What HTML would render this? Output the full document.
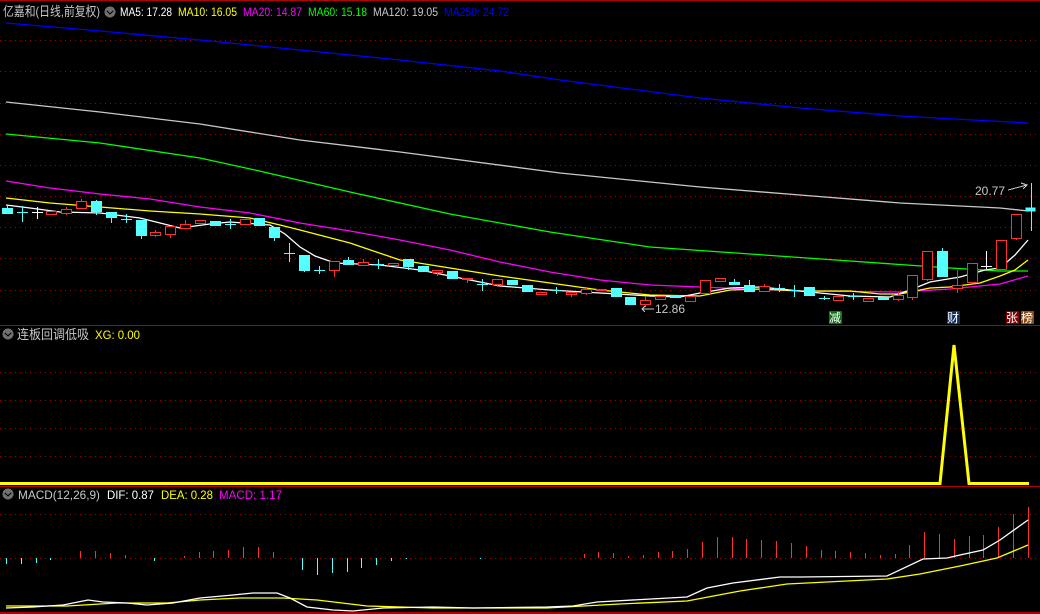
<!DOCTYPE html>
<html><head><meta charset="utf-8"><style>
html,body{margin:0;padding:0;background:#000;width:1040px;height:614px;overflow:hidden}
svg{display:block}
text{font-family:"Liberation Sans","Noto Sans CJK SC",sans-serif;font-size:12px}
</style></head><body>
<svg width="1040" height="614" viewBox="0 0 1040 614" xmlns="http://www.w3.org/2000/svg" shape-rendering="crispEdges">
<rect width="1040" height="614" fill="#000"/>
<g fill="#b00000">
<rect x="0" y="0" width="1040" height="1"/>
<rect x="0" y="325" width="1040" height="1"/>
<rect x="0" y="486" width="1040" height="1"/>
<rect x="0" y="612" width="1040" height="2"/>
</g>
<g stroke="#a00000" stroke-width="1" stroke-dasharray="1,4">
<line x1="0" y1="40.5" x2="1040" y2="40.5"/><line x1="0" y1="71.5" x2="1040" y2="71.5"/>
<line x1="0" y1="103.5" x2="1040" y2="103.5"/><line x1="0" y1="134.5" x2="1040" y2="134.5"/>
<line x1="0" y1="165.5" x2="1040" y2="165.5"/><line x1="0" y1="196.5" x2="1040" y2="196.5"/>
<line x1="0" y1="227.5" x2="1040" y2="227.5"/><line x1="0" y1="258.5" x2="1040" y2="258.5"/>
<line x1="0" y1="290.5" x2="1040" y2="290.5"/>
<line x1="0" y1="372.5" x2="1040" y2="372.5"/><line x1="0" y1="400.5" x2="1040" y2="400.5"/>
<line x1="0" y1="428.5" x2="1040" y2="428.5"/><line x1="0" y1="456.5" x2="1040" y2="456.5"/>
<line x1="0" y1="514.5" x2="1040" y2="514.5"/><line x1="0" y1="558.5" x2="1040" y2="558.5"/>
</g>
<g fill="none" stroke-width="1.3" shape-rendering="auto">
<polyline stroke="#0000ff" points="6,23 100,31 200,40 300,50 400,60 500,71 560,80 700,98 800,108 900,116 1028,123"/>
<polyline stroke="#c8c8c8" points="6,102 100,112 200,124 300,140 400,152 560,173 700,187 800,195 900,203 1000,208 1028,211"/>
<polyline stroke="#00ff00" points="6,134 100,143 200,158 255,170 350,192 450,214 550,232 650,247 750,254 850,261 950,268 1000,271 1028,271"/>
<polyline stroke="#ff00ff" points="6,181 50,188 100,194 150,199 200,207 250,213 300,223 350,231 400,240 450,250 500,262 550,272 600,280 650,285 700,287 800,291 900,292 950,289 1000,284 1028,276"/>
<polyline stroke="#ffff00" points="6,198 50,203 100,207 150,211 200,214 250,218 280,225 300,230 350,243 400,260 450,268 500,276 550,283 600,290 650,295 700,296 730,290 760,289 800,291 850,291 880,294 900,294 930,288 950,287 980,283 1000,276 1015,270 1028,260"/>
<polyline stroke="#ffffff" points="6,205 30,208 60,212 100,213 140,218 180,228 210,224 230,222 270,225 285,234 300,247 315,256 335,263 380,265 420,270 460,278 500,286 550,290 600,293 650,296 680,297 700,293 730,288 760,287 800,291 850,296 890,297 910,290 930,282 960,277 985,270 1000,268 1015,255 1028,240"/>
</g>
<g stroke-width="1">
<g stroke="#ff3030" fill="#000">
<line x1="51.5" y1="211" x2="51.5" y2="214"/><rect x="46.5" y="211.5" width="10" height="3"/>
<line x1="66.5" y1="207" x2="66.5" y2="215"/><rect x="61.5" y="209.5" width="10" height="4"/>
<line x1="81.5" y1="199" x2="81.5" y2="208"/><rect x="76.5" y="201.5" width="10" height="7"/>
<line x1="155.5" y1="230" x2="155.5" y2="237"/><rect x="150.5" y="232.5" width="10" height="3"/>
<line x1="170.5" y1="226" x2="170.5" y2="238"/><rect x="165.5" y="226.5" width="10" height="8"/>
<line x1="185.5" y1="220" x2="185.5" y2="228"/><rect x="180.5" y="224.5" width="10" height="4"/>
<rect x="195.5" y="220.5" width="10" height="3"/>
<rect x="240.5" y="219.5" width="10" height="5"/>
<line x1="334.5" y1="261" x2="334.5" y2="277"/><rect x="329.5" y="261.5" width="10" height="9"/>
<line x1="363.5" y1="259" x2="363.5" y2="265"/><rect x="358.5" y="262.5" width="10" height="3"/>
<rect x="388.5" y="263.5" width="10" height="2"/>
<line x1="437.5" y1="270" x2="437.5" y2="276"/><rect x="432.5" y="270.5" width="10" height="2"/>
<line x1="467.5" y1="278" x2="467.5" y2="283"/><rect x="462.5" y="278.5" width="10" height="1"/>
<line x1="497.5" y1="279" x2="497.5" y2="287"/><rect x="492.5" y="279.5" width="10" height="5"/>
<rect x="536.5" y="292.5" width="10" height="2"/>
<line x1="571.5" y1="292" x2="571.5" y2="297"/><rect x="566.5" y="292.5" width="10" height="2"/>
<line x1="586.5" y1="287" x2="586.5" y2="295"/><rect x="581.5" y="289.5" width="10" height="4"/>
<rect x="596.5" y="289.5" width="10" height="1"/>
<line x1="645.5" y1="296" x2="645.5" y2="307"/><rect x="640.5" y="300.5" width="10" height="4"/>
<rect x="655.5" y="296.5" width="10" height="3"/>
<rect x="685.5" y="296.5" width="10" height="5"/>
<rect x="700.5" y="280.5" width="10" height="13"/>
<rect x="715.5" y="278.5" width="10" height="3"/>
<line x1="764.5" y1="284" x2="764.5" y2="291"/><rect x="759.5" y="286.5" width="10" height="5"/>
<rect x="833.5" y="296.5" width="10" height="4"/>
<rect x="863.5" y="298.5" width="10" height="3"/>
<line x1="898.5" y1="292" x2="898.5" y2="301"/><rect x="893.5" y="295.5" width="10" height="4"/>
<line x1="912.5" y1="275" x2="912.5" y2="300"/><rect x="907.5" y="275.5" width="10" height="22"/>
<line x1="927.5" y1="251" x2="927.5" y2="281"/><rect x="922.5" y="251.5" width="10" height="28"/>
<line x1="957.5" y1="270" x2="957.5" y2="293"/><rect x="952.5" y="285.5" width="10" height="3"/>
<rect x="967.5" y="263.5" width="10" height="19"/>
<rect x="996.5" y="240.5" width="10" height="29"/>
<line x1="1016.5" y1="238" x2="1016.5" y2="240"/><rect x="1011.5" y="214.5" width="10" height="24"/>
</g>
<g fill="#54ffff" stroke="#54ffff">
<line x1="7.5" y1="205" x2="7.5" y2="214"/><rect x="2.5" y="208.5" width="10" height="5"/>
<line x1="22.5" y1="206" x2="22.5" y2="222"/><line x1="17" y1="212.5" x2="28" y2="212.5"/>
<line x1="96.5" y1="200" x2="96.5" y2="215"/><rect x="91.5" y="201.5" width="10" height="10"/>
<line x1="111.5" y1="212" x2="111.5" y2="223"/><rect x="106.5" y="212.5" width="10" height="5"/>
<line x1="126.5" y1="214" x2="126.5" y2="223"/><line x1="121" y1="219.5" x2="132" y2="219.5"/>
<line x1="141.5" y1="220" x2="141.5" y2="239"/><rect x="136.5" y="220.5" width="10" height="15"/>
<rect x="210.5" y="221.5" width="10" height="4"/>
<line x1="230.5" y1="219" x2="230.5" y2="229"/><line x1="225" y1="224.5" x2="236" y2="224.5"/>
<rect x="254.5" y="218.5" width="10" height="7"/>
<line x1="274.5" y1="227" x2="274.5" y2="241"/><rect x="269.5" y="227.5" width="10" height="10"/>
<line x1="289.5" y1="243" x2="289.5" y2="262"/><line x1="284" y1="253.5" x2="295" y2="253.5"/>
<line x1="304.5" y1="255" x2="304.5" y2="272"/><rect x="299.5" y="255.5" width="10" height="15"/>
<line x1="319.5" y1="266" x2="319.5" y2="274"/><line x1="314" y1="270.5" x2="325" y2="270.5"/>
<line x1="348.5" y1="257" x2="348.5" y2="265"/><rect x="343.5" y="260.5" width="10" height="4"/>
<line x1="378.5" y1="259" x2="378.5" y2="269"/><line x1="373" y1="264.5" x2="384" y2="264.5"/>
<line x1="408.5" y1="259" x2="408.5" y2="270"/><rect x="403.5" y="259.5" width="10" height="7"/>
<rect x="418.5" y="266.5" width="10" height="5"/>
<rect x="447.5" y="271.5" width="10" height="7"/>
<line x1="482.5" y1="279" x2="482.5" y2="291"/><line x1="477" y1="284.5" x2="488" y2="284.5"/>
<rect x="507.5" y="280.5" width="10" height="4"/>
<rect x="522.5" y="285.5" width="10" height="6"/>
<line x1="556.5" y1="287" x2="556.5" y2="294"/><line x1="551" y1="290.5" x2="562" y2="290.5"/>
<rect x="611.5" y="288.5" width="10" height="8"/>
<rect x="625.5" y="297.5" width="10" height="7"/>
<rect x="670.5" y="295.5" width="10" height="2"/>
<line x1="734.5" y1="279" x2="734.5" y2="285"/><rect x="729.5" y="282.5" width="10" height="2"/>
<line x1="749.5" y1="280" x2="749.5" y2="292"/><rect x="744.5" y="285.5" width="10" height="6"/>
<line x1="779.5" y1="284" x2="779.5" y2="292"/><line x1="774" y1="288.5" x2="785" y2="288.5"/>
<line x1="794.5" y1="285" x2="794.5" y2="297"/><line x1="789" y1="290.5" x2="800" y2="290.5"/>
<rect x="804.5" y="287.5" width="10" height="8"/>
<line x1="824.5" y1="296" x2="824.5" y2="300"/><line x1="819" y1="298.5" x2="830" y2="298.5"/>
<line x1="853.5" y1="293" x2="853.5" y2="300"/><line x1="848" y1="296.5" x2="859" y2="296.5"/>
<rect x="878.5" y="297.5" width="10" height="2"/>
<line x1="942.5" y1="248" x2="942.5" y2="277"/><rect x="937.5" y="251.5" width="10" height="25"/>
<line x1="1031.5" y1="183" x2="1031.5" y2="231"/><rect x="1026" y="208" width="9" height="3"/>
</g>
<g stroke="#fff"><line x1="37.5" y1="207" x2="37.5" y2="219"/><line x1="32" y1="212.5" x2="43" y2="212.5"/>
<line x1="986.5" y1="251" x2="986.5" y2="269"/><line x1="981" y1="266.5" x2="992" y2="266.5"/></g>
</g>
<text x="975" y="195" fill="#c8c8c8">20.77</text>
<path d="M1008,190 L1027,185 M1021,183 L1027,185 L1023,189" stroke="#c8c8c8" fill="none" stroke-width="1"/>
<path d="M642,309 L654,309 M645,306 L642,309 L645,312" stroke="#c8c8c8" fill="none"/>
<text x="655" y="313" fill="#c8c8c8">12.86</text>
<rect x="829" y="311" width="13" height="13" fill="#107010"/><text x="829" y="322" fill="#fff">减</text>
<rect x="947" y="311" width="13" height="13" fill="#103060"/><text x="947" y="322" fill="#fff">财</text>
<rect x="1006" y="311" width="13" height="13" fill="#800000"/><text x="1006" y="322" fill="#fff">张</text>
<rect x="1021" y="311" width="13" height="13" fill="#8a4a10"/><text x="1021" y="322" fill="#fff">榜</text>
<text x="3" y="16" fill="#c8c8c8" style="font-size:13px" textLength="97" lengthAdjust="spacingAndGlyphs">亿嘉和(日线,前复权)</text>
<circle cx="110" cy="12" r="5.5" fill="#707070"/><path d="M107,11 L110,14 L113,11" stroke="#000" fill="none" stroke-width="1.3"/>
<text x="120" y="16" fill="#fff" textLength="52" lengthAdjust="spacingAndGlyphs">MA5: 17.28</text>
<text x="178" y="16" fill="#ffff00" textLength="59" lengthAdjust="spacingAndGlyphs">MA10: 16.05</text>
<text x="243" y="16" fill="#ff00ff" textLength="59" lengthAdjust="spacingAndGlyphs">MA20: 14.87</text>
<text x="308" y="16" fill="#00ff00" textLength="59" lengthAdjust="spacingAndGlyphs">MA60: 15.18</text>
<text x="373" y="16" fill="#c8c8c8" textLength="65" lengthAdjust="spacingAndGlyphs">MA120: 19.05</text>
<text x="444" y="16" fill="#0000ff" textLength="65" lengthAdjust="spacingAndGlyphs">MA250: 24.72</text>
<circle cx="8" cy="334" r="5.5" fill="#707070"/><path d="M5,333 L8,336 L11,333" stroke="#000" fill="none" stroke-width="1.3"/>
<text x="17" y="339" fill="#c8c8c8" style="font-size:13px" textLength="72" lengthAdjust="spacingAndGlyphs">连板回调低吸</text>
<text x="95" y="339" fill="#ffff00" textLength="45" lengthAdjust="spacingAndGlyphs">XG: 0.00</text>
<polyline fill="none" stroke="#ffff00" stroke-width="3" shape-rendering="auto" points="0,483.5 940,483.5 954,345 969,483.5 1029,483.5"/>
<circle cx="8" cy="494" r="5.5" fill="#707070"/><path d="M5,493 L8,496 L11,493" stroke="#000" fill="none" stroke-width="1.3"/>
<text x="18" y="499" fill="#c8c8c8" textLength="82" lengthAdjust="spacingAndGlyphs">MACD(12,26,9)</text>
<text x="107" y="499" fill="#fff" textLength="47" lengthAdjust="spacingAndGlyphs">DIF: 0.87</text>
<text x="161" y="499" fill="#ffff00" textLength="52" lengthAdjust="spacingAndGlyphs">DEA: 0.28</text>
<text x="219" y="499" fill="#ff00ff" textLength="63" lengthAdjust="spacingAndGlyphs">MACD: 1.17</text>
<g stroke="#54ffff">
<line x1="6.5" y1="558" x2="6.5" y2="564"/><line x1="21.5" y1="558" x2="21.5" y2="564"/><line x1="36.5" y1="558" x2="36.5" y2="563"/><line x1="50.5" y1="558" x2="50.5" y2="560"/>
<line x1="154.5" y1="558" x2="154.5" y2="561"/>
<line x1="302.5" y1="558" x2="302.5" y2="570"/><line x1="317.5" y1="558" x2="317.5" y2="575"/><line x1="332.5" y1="558" x2="332.5" y2="573"/><line x1="347.5" y1="558" x2="347.5" y2="572"/><line x1="361.5" y1="558" x2="361.5" y2="568"/><line x1="376.5" y1="558" x2="376.5" y2="565"/><line x1="391.5" y1="558" x2="391.5" y2="561"/><line x1="406.5" y1="558" x2="406.5" y2="559"/><line x1="480.5" y1="558" x2="480.5" y2="559"/>
</g>
<g stroke="#ff3030">
<line x1="80.5" y1="551" x2="80.5" y2="558"/><line x1="95.5" y1="551" x2="95.5" y2="558"/><line x1="110.5" y1="553" x2="110.5" y2="558"/><line x1="125.5" y1="555" x2="125.5" y2="558"/>
<line x1="184.5" y1="556" x2="184.5" y2="558"/><line x1="199.5" y1="552" x2="199.5" y2="558"/><line x1="213.5" y1="551" x2="213.5" y2="558"/><line x1="228.5" y1="550" x2="228.5" y2="558"/><line x1="243.5" y1="547" x2="243.5" y2="558"/><line x1="258.5" y1="547" x2="258.5" y2="558"/><line x1="273.5" y1="552" x2="273.5" y2="558"/>
<line x1="584.5" y1="554" x2="584.5" y2="558"/><line x1="598.5" y1="552" x2="598.5" y2="558"/><line x1="613.5" y1="553" x2="613.5" y2="558"/><line x1="628.5" y1="556" x2="628.5" y2="558"/><line x1="643.5" y1="555" x2="643.5" y2="558"/><line x1="658.5" y1="552" x2="658.5" y2="558"/><line x1="672.5" y1="551" x2="672.5" y2="558"/><line x1="687.5" y1="549" x2="687.5" y2="558"/><line x1="702.5" y1="542" x2="702.5" y2="558"/><line x1="717.5" y1="537" x2="717.5" y2="558"/><line x1="732.5" y1="537" x2="732.5" y2="558"/><line x1="746.5" y1="539" x2="746.5" y2="558"/><line x1="761.5" y1="540" x2="761.5" y2="558"/><line x1="776.5" y1="541" x2="776.5" y2="558"/><line x1="791.5" y1="543" x2="791.5" y2="558"/><line x1="806.5" y1="546" x2="806.5" y2="558"/><line x1="821.5" y1="550" x2="821.5" y2="558"/><line x1="835.5" y1="551" x2="835.5" y2="558"/><line x1="850.5" y1="552" x2="850.5" y2="558"/><line x1="865.5" y1="553" x2="865.5" y2="558"/><line x1="880.5" y1="555" x2="880.5" y2="558"/><line x1="895.5" y1="554" x2="895.5" y2="558"/><line x1="909.5" y1="545" x2="909.5" y2="558"/><line x1="924.5" y1="532" x2="924.5" y2="558"/><line x1="939.5" y1="534" x2="939.5" y2="558"/><line x1="954.5" y1="539" x2="954.5" y2="558"/><line x1="969.5" y1="536" x2="969.5" y2="558"/><line x1="983.5" y1="535" x2="983.5" y2="558"/><line x1="998.5" y1="527" x2="998.5" y2="558"/><line x1="1013.5" y1="514" x2="1013.5" y2="558"/><line x1="1028.5" y1="507" x2="1028.5" y2="558"/>
</g>
<g fill="none" stroke-width="1.3" shape-rendering="auto">
<polyline stroke="#ffff00" points="6,606 67,606 117,603 167,603 200,600 240,598 283,598 317,600 367,606 433,608 547,608 620,604 687,601 740,591 787,584 887,579 920,574 960,566 997,558 1028,545"/>
<polyline stroke="#ffffff" points="6,608 33,607 63,605 88,600 103,602 127,603 147,605 173,603 200,598 233,595 253,593 277,593 290,598 307,607 333,610 353,611 383,608 433,607 473,608 547,607 573,606 597,602 687,597 707,588 733,583 780,577 800,577 887,576 923,559 947,558 960,555 983,550 1000,540 1028,520"/>
</g>
</svg>
</body></html>
